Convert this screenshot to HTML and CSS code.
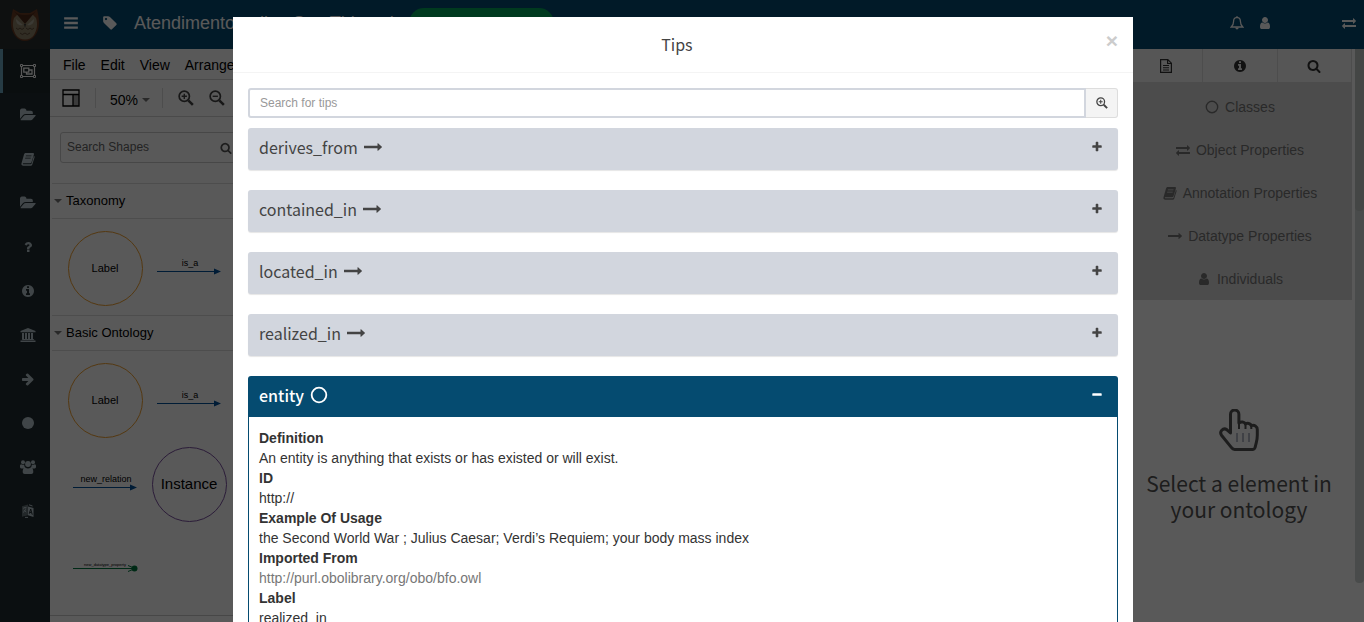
FILE: index.html
```html
<!DOCTYPE html>
<html lang="en">
<head>
<meta charset="utf-8">
<title>Tips</title>
<link rel="stylesheet" href="styles.css">
</head>
<body>
<svg class="defs" aria-hidden="true">
  <symbol id="bars" viewBox="0 0 14 14"><path d="M1 2h12v2H1zM1 6h12v2H1zM1 10h12v2H1z"/></symbol>
  <symbol id="tag" viewBox="0 0 1792 1792"><path d="M576 448q0-53-37.500-90.500t-90.500-37.500-90.500 37.500-37.500 90.500 37.500 90.500 90.500 37.500 90.500-37.500 37.500-90.500zm1067 576q0 53-37 90l-491 492q-39 37-91 37-53 0-90-37l-715-716q-38-37-64.500-101t-26.500-117v-416q0-52 38-90t90-38h416q53 0 117 26.500t102 64.500l715 714q37 39 37 91z"/></symbol>
  <symbol id="folder" viewBox="0 0 1920 1792"><path d="M1879 952q0 31-31 66l-336 396q-43 51-120.500 86.500t-143.500 35.500h-1088q-34 0-60.500-13t-26.500-43q0-31 31-66l336-396q43-51 120.500-86.500t143.500-35.500h1088q34 0 60.500 13t26.500 43zm-343-344v160h-832q-94 0-197 47.500t-164 119.500l-337 396-5 6q0-4-.5-12.500t-.5-12.500v-960q0-92 66-158t158-66h320q92 0 158 66t66 158v32h544q92 0 158 66t66 158z"/></symbol>
  <symbol id="question" viewBox="0 0 1792 1792"><path d="M1088 1256v240q0 16-12 28t-28 12h-240q-16 0-28-12t-12-28v-240q0-16 12-28t28-12h240q16 0 28 12t12 28zm316-600q0 54-15.500 101t-35 76.500-55 59.500-57.500 43.500-61 35.500q-41 23-68.500 65t-27.500 67q0 17-12 32.500t-28 15.500h-240q-15 0-25.500-18.500t-10.500-37.500v-45q0-83 65-156.500t143-108.500q59-27 84-56t25-76q0-42-46.500-74t-107.500-32q-65 0-108 29-35 25-107 115-13 16-31 16-12 0-25-8l-164-125q-13-10-15.500-25t5.500-28q160-266 464-266 80 0 161 31t146 83 106 127.500 41 158.500z"/></symbol>
  <symbol id="info" viewBox="0 0 1792 1792"><path d="M1152 1376v-160q0-14-9-23t-23-9h-96v-512q0-14-9-23t-23-9h-320q-14 0-23 9t-9 23v160q0 14 9 23t23 9h96v320h-96q-14 0-23 9t-9 23v160q0 14 9 23t23 9h448q14 0 23-9t9-23zm-128-896v-160q0-14-9-23t-23-9h-192q-14 0-23 9t-9 23v160q0 14 9 23t23 9h192q14 0 23-9t9-23zm640 416q0 209-103 385.500t-279.500 279.500-385.500 103-385.500-103-279.500-279.500-103-385.500 103-385.500 279.500-279.500 385.500-103 385.500 103 279.500 279.500 103 385.500z"/></symbol>
  <symbol id="search" viewBox="0 0 1792 1792"><path d="M1216 832q0-185-131.500-316.500t-316.500-131.500-316.500 131.500-131.500 316.500 131.500 316.500 316.500 131.500 316.500-131.500 131.500-316.500zm512 832q0 52-38 90t-90 38q-54 0-90-38l-343-342q-179 124-399 124-143 0-273.500-55.500t-225-150-150-225-55.500-273.500 55.500-273.500 150-225 225-150 273.500-55.500 273.500 55.500 225 150 150 225 55.500 273.500q0 220-124 399l343 343q37 37 37 90z"/></symbol>
  <symbol id="zoomin" viewBox="0 0 14 14"><g fill="none" stroke="currentColor"><circle cx="5.500" cy="5.500" r="4.500" stroke-width="1.500"/><path d="M9 9l4 4" stroke-width="2.200"/><path d="M5.500 3.200v4.600M3.200 5.500h4.600" stroke-width="1.200"/></g></symbol>
  <symbol id="zoomout" viewBox="0 0 14 14"><g fill="none" stroke="currentColor"><circle cx="5.500" cy="5.500" r="4.500" stroke-width="1.500"/><path d="M9 9l4 4" stroke-width="2.200"/><path d="M3.200 5.500h4.600" stroke-width="1.200"/></g></symbol>
  <symbol id="user" viewBox="0 0 1792 1792"><path d="M1536 1399q0 109-62.500 187t-150.500 78h-854q-88 0-150.500-78t-62.500-187q0-85 8.500-160.500t31.500-152 58.500-131 94-89 134.500-34.500q131 128 313 128t313-128q76 0 134.500 34.500t94 89 58.500 131 31.500 152 8.500 160.500zm-256-887q0 159-112.500 271.500t-271.500 112.500-271.500-112.500-112.500-271.500 112.500-271.500 271.500-112.500 271.500 112.500 112.500 271.500z"/></symbol>
  <symbol id="exchange" viewBox="0 0 1792 1792"><path d="M1792 1184v192q0 13-9.500 22.500t-22.500 9.500h-1376v192q0 13-9.500 22.500t-22.500 9.500q-12 0-24-10l-319-320q-9-9-9-22 0-14 9-23l320-320q9-9 23-9 13 0 22.500 9.500t9.500 22.500v192h1376q13 0 22.500 9.500t9.500 22.500zm0-544q0 14-9 23l-320 320q-9 9-23 9-13 0-22.500-9.500t-9.500-22.500v-192h-1376q-13 0-22.500-9.500t-9.500-22.500v-192q0-13 9.500-22.500t22.500-9.500h1376v-192q0-14 9-23t23-9q12 0 24 10l319 319q9 9 9 23z"/></symbol>
  <symbol id="right" viewBox="0 0 1792 1792"><path d="M1600 960q0 54-37 91l-651 651q-39 37-91 37-51 0-90-37l-75-75q-38-38-38-91t38-91l293-293h-704q-52 0-84.500-37.500t-32.500-90.500v-128q0-53 32.500-90.500t84.500-37.500h704l-293-294q-38-36-38-90t38-90l75-75q38-38 90-38 53 0 91 38l651 651q37 35 37 90z"/></symbol>
  <symbol id="long" viewBox="0 0 1792 1792"><path d="M1792 893q0 14-10 24l-384 354q-16 14-35 6-19-9-19-29v-224h-1312q-14 0-23-9t-9-23v-192q0-14 9-23t23-9h1312v-224q0-21 19-29t35 5l384 350q10 10 10 23z"/></symbol>
  <symbol id="plus" viewBox="0 0 1792 1792"><path d="M1600 736v192q0 40-28 68t-68 28h-416v416q0 40-28 68t-68 28h-192q-40 0-68-28t-28-68v-416h-416q-40 0-68-28t-28-68v-192q0-40 28-68t68-28h416v-416q0-40 28-68t68-28h192q40 0 68 28t28 68v416h416q40 0 68 28t28 68z"/></symbol>
  <symbol id="minus" viewBox="0 0 1792 1792"><rect x="192" y="640" width="1408" height="384" rx="96"/></symbol>
  <symbol id="ring" viewBox="0 0 16 16"><circle cx="8" cy="8" r="6.500" fill="none" stroke="currentColor" stroke-width="1.600"/></symbol>
  <symbol id="disc" viewBox="0 0 14 14"><circle cx="7" cy="7" r="6"/></symbol>
  <symbol id="book" viewBox="0 0 14 14"><path fill-rule="evenodd" d="M4.600 1h7.200c1 0 1.400.6 1.100 1.500l-2.400 7.700c-.2.700-.7 1-1.400 1H2.300c-.5 0-.6.300-.4.700.1.300.4.400.9.400h6.800c.5 0 .9-.3 1-.8l2.300-7.500c.7.200.9.700.7 1.300l-2.300 7.100c-.3.800-1 1.300-1.800 1.300H2.300C1 13.700 0 12.500.5 11.200L3 2.600C3.300 1.600 3.700 1 4.600 1zM5 3.400l-.3.900h5.600l.3-.9zM4.300 5.700l-.3.900h5.600l.3-.9z"/></symbol>
  <symbol id="bank" viewBox="0 0 16 16"><path d="M8 1l7.500 3v1.200H.5V4zM2 6h2v6h1V6h2v6h1V6h2v6h1V6h2v6h.5l.8 1H1.700l.8-1H2zM.5 13.600h15V15H.5z"/></symbol>
  <symbol id="users" viewBox="0 0 16 14"><circle cx="3" cy="2.200" r="2"/><circle cx="13" cy="2.200" r="2"/><circle cx="8" cy="4" r="2.900"/><path d="M0 7V6c0-1 .5-1.700 1.200-1.700 1 .6 2 .6 3 .4 0 1 .3 2 1 2.700-.9 0-1.500.4-2 1H1.400C.6 8.400 0 7.900 0 7zM16 7V6c0-1-.5-1.700-1.200-1.700-1 .6-2 .6-3 .4 0 1-.3 2-1 2.700.9 0 1.500.4 2 1h1.800c.8 0 1.400-.5 1.400-1.400zM2.700 12c0-2.500.7-4.500 2.600-4.500 1.700 1.400 3.700 1.400 5.400 0 1.900 0 2.600 2 2.600 4.500 0 1.300-.9 2-2 2H4.700c-1.100 0-2-.7-2-2z"/></symbol>
  <symbol id="lang" viewBox="0 0 14 14"><path d="M1 2.300L7 .5v10.700l-6 1.600z" opacity=".45"/><path d="M7 2.500l5.500 1.600v9L7 11.200z"/><path fill="none" stroke="currentColor" d="M2 4.300l3.500-1M3.800 3v1M2 8.500c1.500-1 2.400-2.300 2.700-4M2.600 6l2.700 2M8 .8l3.500 1.200M4 13.400h3"/><path fill="none" stroke="#222d32" d="M8.300 9.700L9.700 5l1.600 5.700M8.700 8.300l2 .6"/></symbol>
  <symbol id="group" viewBox="0 0 16 14"><g fill="none" stroke="currentColor"><path d="M2 1.500h12M2 12.500h12M1.500 2v10M14.500 2v10" stroke-width="1.200"/><path d="M3.800 4.200h5v4h-5zM9 6h3v4H6.500V8.500" stroke-width="1.300"/><path d="M.5.500h2v2h-2zM13.500.5h2v2h-2zM.5 11.500h2v2h-2zM13.500 11.500h2v2h-2z" stroke-width="1"/></g></symbol>
  <symbol id="bell" viewBox="0 0 14 14"><path d="M7 1.400C4.600 1.600 3.600 3.300 3.600 5.200 3.600 8.500 2.600 9.800 1.200 11h11.600c-1.400-1.200-2.400-2.500-2.400-5.800 0-1.900-1-3.600-3.400-3.800z" fill="none" stroke="currentColor" stroke-width="1.300"/><path d="M6.300.3h1.400v1.400H6.300zM5.300 11.500h3.400c0 1-.7 1.900-1.700 1.900s-1.700-.9-1.700-1.900z"/></symbol>
  <symbol id="file" viewBox="0 0 12 14"><path d="M.6.600h7.200l3.600 3.600v9.200H.6zM7.600.6v3.900h3.800" fill="none" stroke="currentColor" stroke-width="1.200"/><path d="M3 6h6v1H3zM3 8.300h6v1H3zM3 10.500h6v1H3z"/></symbol>
  <symbol id="hand" viewBox="0 0 40 42"><path d="M11.500 24V5.200a4.200 4.200 0 0 1 8.400 0V14c2-1.700 5.600-1.300 6.500 1 2-1.200 5-.7 5.900 1.600 3-1 6 .6 6 4v5.600c0 3-.4 5-1 7.400l-1.200 4.800c-.4 1.400-1.300 2-2.600 2H15.600c-1.500 0-2.400-.8-3.300-2L2.700 26.500c-2.900-3.800 1.400-8.300 5.300-5.700z" fill="none" stroke="currentColor" stroke-width="3" stroke-linejoin="round"/><path d="M20 13v7M26.500 15v5M32.300 16.500V20" stroke="currentColor" stroke-width="2"/><path d="M18 24v9M24 24v9M30 24v9" stroke="#6f7690" stroke-width="1"/></symbol>
</svg>

<div class="app">
  <nav class="rail" aria-label="Main">
    <a class="logo" href="#" aria-label="Home">
      <svg viewBox="0 0 30 34" width="30" height="34"><path d="M3 1l7 4h10l7-4c1 5 2 8 2 14 0 10-6 18-14 18S1 25 1 15C1 9 2 6 3 1z" fill="#6a3c24"/><path d="M4 10l4-4 7 9 7-9 4 4c2 6 1 12-2 17-4 6-14 6-18 0C3 22 2 16 4 10z" fill="#8d8069"/><path d="M4 3l11 13L26 3c-3 3-6 4-11 4S7 6 4 3z" fill="#4c2818"/><path d="M6 11l7 6c-4 1-7-1-7-6zM24 11l-7 6c4 1 7-1 7-6z" fill="#aaa595"/><path d="M14 16h2l-1 4z" fill="#333"/><path d="M6 20q2 3 4 0 2 3 4 0M16 20q2 3 4 0 2 3 4 0M10 25q2 3 5 0 2 3 5 0" fill="none" stroke="#5c4a36"/></svg>
    </a>
    <a class="rail-item active" href="#" aria-label="Diagram"><svg class="i16"><use href="#group"/></svg></a>
    <a class="rail-item" href="#" aria-label="Projects"><svg class="i16"><use href="#folder"/></svg></a>
    <a class="rail-item" href="#" aria-label="Glossary"><svg class="i14"><use href="#book"/></svg></a>
    <a class="rail-item" href="#" aria-label="Files"><svg class="i16"><use href="#folder"/></svg></a>
    <a class="rail-item" href="#" aria-label="Help"><svg class="i14"><use href="#question"/></svg></a>
    <a class="rail-item" href="#" aria-label="About"><svg class="i14"><use href="#info"/></svg></a>
    <a class="rail-item" href="#" aria-label="Institution"><svg class="i16"><use href="#bank"/></svg></a>
    <a class="rail-item" href="#" aria-label="Relations"><svg class="i14"><use href="#right"/></svg></a>
    <a class="rail-item" href="#" aria-label="Classes"><svg class="i14"><use href="#disc"/></svg></a>
    <a class="rail-item" href="#" aria-label="Users"><svg class="i16"><use href="#users"/></svg></a>
    <a class="rail-item" href="#" aria-label="Language"><svg class="i14"><use href="#lang"/></svg></a>
  </nav>

  <div class="main">
    <header class="topbar">
      <button class="plain" aria-label="Toggle menu"><svg class="i16"><use href="#bars"/></svg></button>
      <svg class="i16 tag"><use href="#tag"/></svg>
      <span class="project">Atendimento online San Thiago k</span>
      <span class="status">Salvo com sucesso</span>
      <div class="tools">
        <button class="plain" aria-label="Notifications"><svg class="i14"><use href="#bell"/></svg></button>
        <button class="plain" aria-label="Account"><svg class="i14"><use href="#user"/></svg></button>
        <button class="plain swap" aria-label="Switch"><svg class="i14"><use href="#exchange"/></svg></button>
      </div>
    </header>

    <div class="work">
      <section class="editor">
        <div class="menubar"><a href="#">File</a><a href="#">Edit</a><a href="#">View</a><a href="#">Arrange</a></div>
        <div class="toolbar">
          <button class="plain" aria-label="Format panel"><svg width="18" height="18" viewBox="0 0 18 18"><path d="M11 6h6v11h-6z" fill="#aaa"/><path d="M1 1h16v16H1zM1 5.500h16M11 5.500V17" fill="none" stroke="#000" stroke-width="1.300"/></svg></button>
          <button class="plain zoom">50%<span class="caret"></span></button>
          <button class="plain" aria-label="Zoom in"><svg class="i16"><use href="#zoomin"/></svg></button>
          <button class="plain" aria-label="Zoom out"><svg class="i16"><use href="#zoomout"/></svg></button>
        </div>
        <div class="palette">
          <label class="shape-search"><input type="text" placeholder="Search Shapes" aria-label="Search Shapes"><svg class="i12"><use href="#search"/></svg></label>
          <h2 class="group-title"><span class="caret"></span>Taxonomy</h2>
          <svg class="shapes" width="182" height="96" viewBox="0 0 182 96">
            <circle cx="55.500" cy="49.500" r="37" class="class-ring"/><text x="55" y="53" class="t11">Label</text>
            <path d="M107 52.500h58" class="edge"/><path d="M164 49.500l7 3-7 3z" class="arrow"/><text x="140" y="47" class="t9">is_a</text>
          </svg>
          <h2 class="group-title"><span class="caret"></span>Basic Ontology</h2>
          <svg class="shapes" width="182" height="264" viewBox="0 0 182 264">
            <circle cx="55.500" cy="49.500" r="37" class="class-ring"/><text x="55" y="53" class="t11">Label</text>
            <path d="M107 52.500h58" class="edge"/><path d="M164 49.500l7 3-7 3z" class="arrow"/><text x="140" y="47" class="t9">is_a</text>
            <path d="M23 136.500h58" class="edge"/><path d="M80 133.500l7 3-7 3z" class="arrow"/><text x="56" y="131" class="t9">new_relation</text>
            <circle cx="139.500" cy="133.500" r="37" class="inst-ring"/><text x="139" y="138" class="t15">Instance</text>
            <path d="M23 217.500h60M78 214.500l7 3-7 3" class="edge green"/><circle cx="84.500" cy="217.500" r="3" fill="#00793f"/><text x="55" y="215" class="t4">new_datatype_property</text>
          </svg>
        </div>
      </section>

      <aside class="inspector">
        <div class="tabs">
          <button aria-label="Document"><svg class="i14"><use href="#file"/></svg></button>
          <button aria-label="Information"><svg class="i14"><use href="#info"/></svg></button>
          <button aria-label="Search"><svg class="i14"><use href="#search"/></svg></button>
        </div>
        <ul class="kinds">
          <li><svg class="i14"><use href="#ring"/></svg>Classes</li>
          <li><svg class="i14"><use href="#exchange"/></svg>Object Properties</li>
          <li><svg class="i14"><use href="#book"/></svg>Annotation Properties</li>
          <li><svg class="i14"><use href="#long"/></svg>Datatype Properties</li>
          <li><svg class="i14"><use href="#user"/></svg>Individuals</li>
        </ul>
        <div class="empty">
          <svg width="40" height="42"><use href="#hand"/></svg>
          <p>Select a element in your ontology</p>
        </div>
      </aside>
      <div class="scroll"><div class="thumb"></div></div>
    </div>
  </div>
</div>

<div class="backdrop"></div>
<div class="modal-layer">
  <div class="modal" role="dialog" aria-labelledby="tips-title">
    <header class="modal-head">
      <h1 id="tips-title">Tips</h1>
      <button class="close" aria-label="Close">×</button>
    </header>
    <div class="modal-body">
      <form class="tip-search">
        <input type="text" placeholder="Search for tips" aria-label="Search for tips">
        <button type="button" aria-label="Search"><svg class="i12"><use href="#zoomin"/></svg></button>
      </form>
      <section class="tip"><h3>derives_from <svg class="i18"><use href="#long"/></svg></h3><button class="plain" aria-label="Expand"><svg class="i12"><use href="#plus"/></svg></button></section>
      <section class="tip"><h3>contained_in <svg class="i18"><use href="#long"/></svg></h3><button class="plain" aria-label="Expand"><svg class="i12"><use href="#plus"/></svg></button></section>
      <section class="tip"><h3>located_in <svg class="i18"><use href="#long"/></svg></h3><button class="plain" aria-label="Expand"><svg class="i12"><use href="#plus"/></svg></button></section>
      <section class="tip"><h3>realized_in <svg class="i18"><use href="#long"/></svg></h3><button class="plain" aria-label="Expand"><svg class="i12"><use href="#plus"/></svg></button></section>
      <section>
        <div class="tip open"><h3>entity <svg class="i18"><use href="#ring"/></svg></h3><button class="plain" aria-label="Collapse"><svg class="i12"><use href="#minus"/></svg></button></div>
        <dl>
          <dt>Definition</dt><dd>An entity is anything that exists or has existed or will exist.</dd>
          <dt>ID</dt><dd>http://</dd>
          <dt>Example Of Usage</dt><dd>the Second World War ; Julius Caesar; Verdi’s Requiem; your body mass index</dd>
          <dt>Imported From</dt><dd><a href="#">http://purl.obolibrary.org/obo/bfo.owl</a></dd>
          <dt>Label</dt><dd>realized_in</dd>
        </dl>
      </section>
    </div>
  </div>
</div>
</body>
</html>
```
FILE: styles.css
```css
* { box-sizing: border-box; }
body {
  margin: 0;
  overflow: hidden;
  font: 14px/20px "Liberation Sans", Arial, sans-serif;
  color: #333;
  background: #fff;
}
svg { display: block; flex: none; fill: currentColor; }
.defs { position: absolute; width: 0; height: 0; }
.i12 { width: 12px; height: 12px; }
.i14 { width: 14px; height: 14px; }
.i16 { width: 16px; height: 16px; }
.i18 { width: 18px; height: 18px; }
a { color: inherit; text-decoration: none; }
h1, h2, h3, p, ul, dl, dd { margin: 0; padding: 0; font-weight: 400; }
button, input { font: inherit; color: inherit; margin: 0; }
.plain { display: flex; align-items: center; padding: 0; border: 0; background: none; }
.caret { border: 4px solid transparent; border-top: 4px solid #777; border-bottom: 0; }

.app { display: flex; height: 100vh; }
.rail { width: 50px; flex: none; background: #222d32; color: #b8c7ce; }
.logo { display: flex; align-items: center; justify-content: center; height: 49px; background: #2a2f2e; }
.rail-item {
  display: flex; align-items: center; justify-content: center;
  height: 44px; padding: 0 1px 0 3px; border-left: 3px solid transparent;
}
.rail-item.active { border-left-color: #6ea9c4; background: #1e282c; color: #fff; }

.main { flex: 1; min-width: 0; display: flex; flex-direction: column; }
.topbar {
  display: flex; align-items: center; height: 49px; padding: 0 8px 3px 13px;
  color: #fff; background: #054b72; flex: none;
}
.tag { margin: 0 16px 0 23px; }
.project { font-size: 18px; white-space: nowrap; }
.status {
  margin-left: 10px; padding: 3px 11px; border-radius: 15px; background: #00a65a;
  font-size: 14px; line-height: 24px; width: 145px; white-space: nowrap; overflow: hidden;
}
.tools { display: flex; margin-left: auto; gap: 14px; }
.swap { margin-left: 56px; }

.work { flex: 1; min-height: 0; display: flex; background: #fff; }
.editor { flex: 1; min-width: 0; color: #000; }
.menubar { display: flex; gap: 15px; height: 31px; padding: 6px 13px; border-bottom: 1px solid #d5d5d5; }
.toolbar {
  display: flex; align-items: center; gap: 15px; height: 37px; padding: 0 12px;
  border-bottom: 1px solid #d5d5d5; color: #444;
}
.toolbar .zoom {
  gap: 4px; height: 20px; padding: 4px 12px 0 14px; color: #000;
  border: solid #ddd; border-width: 0 1px;
}
.palette { padding-left: 2px; border-bottom: 1px solid #ccc; }
.shape-search {
  display: flex; align-items: center; width: 180px; height: 31px; margin: 15px 8px 20px;
  padding: 0 7px 0 6px; border: 1px solid #ccc; border-radius: 3px; color: #555;
}
.shape-search input { flex: 1; min-width: 0; padding: 0 0 2px; border: 0; background: none; font-size: 12px; }
.shape-search input::placeholder { color: #666; opacity: 1; }
.group-title {
  display: flex; align-items: center; gap: 4px; height: 36px; padding-left: 2px;
  border: solid #ddd; border-width: 1px 0; font-size: 13px;
}
.shapes { margin-left: -2px; }
.shapes text { text-anchor: middle; fill: #000; }
.t4 { font-size: 4px; }
.t9 { font-size: 9px; }
.t11 { font-size: 11px; }
.t15 { font-size: 15px; }
.class-ring, .inst-ring { fill: none; stroke: #f0a030; stroke-width: 1; }
.inst-ring { stroke: #7a4fa0; }
.edge { fill: none; stroke: #00509a; stroke-width: 1; }
.arrow { fill: #00509a; }
.green { stroke: #00793f; }

.inspector { width: 224px; flex: none; display: flex; flex-direction: column; }
.tabs { display: grid; grid-template-columns: repeat(3, 1fr); height: 33px; flex: none; border-right: 1px solid #ddd; }
.tabs button {
  display: flex; align-items: center; justify-content: center; padding: 0;
  border: 0; border-left: 1px solid #ddd; background: #f6f6f6; color: #333;
}
.kinds { list-style: none; padding: 3px 0 0; height: 218px; background: #dadada; color: #777; flex: none; }
.kinds li { display: flex; align-items: center; justify-content: center; gap: 6px; height: 43px; }
.empty {
  flex: 1; display: flex; flex-direction: column; align-items: center; gap: 19px;
  padding: 109px 12px 0 10px; color: #555; text-align: center;
}
.empty p { font: 21px/26px "Noto Sans CJK SC", sans-serif; }
.scroll { flex: none; width: 9px; height: 534px; margin: 0 0 0 3px; border-radius: 0 0 4px 4px; background: #d2d8d6; }
.thumb { height: 162px; border-radius: 0 0 4px 4px; background: #c2c8c6; }

.backdrop { position: fixed; inset: 0; background: rgba(0, 0, 0, 0.65); }
.modal-layer { position: fixed; inset: 0; overflow: hidden; padding: 17px 0 0 2px; }
.modal { max-width: 900px; margin: 0 auto; background: #fff; }
.modal-head { display: flex; align-items: flex-start; padding: 15px; border-bottom: 1px solid #f4f4f4; color: #444; }
.modal-head h1 { flex: 1; font: 16px/25px "Noto Sans CJK SC", sans-serif; text-align: center; }
.close { padding: 0; border: 0; background: none; color: #ccc; font-size: 21px; font-weight: 700; line-height: 18px; }
.modal-body { padding: 15px; }
.tip-search { display: flex; height: 30px; margin-bottom: 10px; }
.tip-search input {
  flex: 1; min-width: 0; padding: 0 10px; border: 2px solid #d2d6de;
  border-radius: 3px 0 0 3px; font-size: 12px;
}
.tip-search input::placeholder { color: #999; opacity: 1; }
.tip-search button {
  display: flex; align-items: center; justify-content: center; width: 32px; padding: 0;
  border: 1px solid #ddd; border-left: 0; border-radius: 0 3px 3px 0; background: #f4f4f4; color: #444;
}
.tip {
  display: flex; align-items: center; justify-content: space-between; height: 42px;
  margin-bottom: 20px; padding: 0 15px 5px 11px; border-radius: 3px;
  background: #d2d6de; color: #444; box-shadow: 0 1px 1px rgba(0, 0, 0, 0.1);
}
.tip h3 { display: flex; align-items: center; gap: 6px; font: 16px/20px "Noto Sans CJK SC", sans-serif; }
.tip.open {
  height: 41px; margin: 0; padding-bottom: 3px; background: #054b70; color: #fff;
  border-radius: 3px 3px 0 0; box-shadow: none;
}
.open h3 { font-weight: 500; }
dl { padding: 11px 10px; border: solid #054b70; border-width: 0 1px 1px; }
dt { font-weight: 700; }
dd a { color: #777; }
```
